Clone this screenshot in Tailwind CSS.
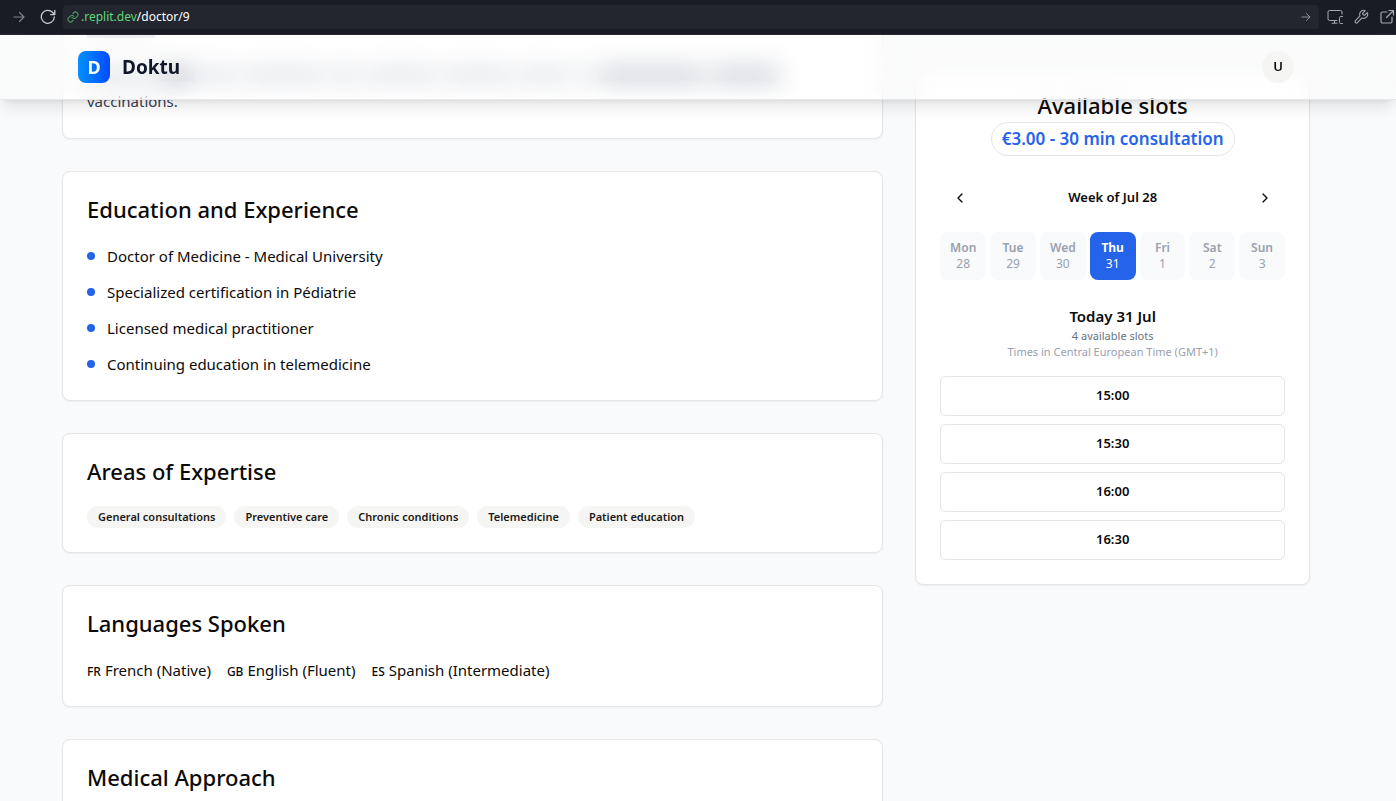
<!DOCTYPE html>
<html lang="en">
<head>
<meta charset="utf-8">
<meta name="viewport" content="width=device-width, initial-scale=1">
<title>Doktu</title>
<script src="https://cdn.jsdelivr.net/npm/@tailwindcss/browser@4"></script>
</head>
<body class="flex h-screen flex-col overflow-hidden bg-[#f9fafb] font-['Noto_Sans','Open_Sans',sans-serif] text-stone-950">

<!-- Browser toolbar -->
<div class="relative z-20 flex h-[35px] shrink-0 items-center border-b border-[#2a2630] bg-[#1a1c25] pr-px pl-3 text-[#a6a8b0]">
  <button type="button" aria-label="Forward" class="mr-3.5 text-[#7f828c]">
    <svg class="size-3.5" viewBox="0 0 14 14" fill="none" stroke="currentColor" stroke-width="1.2" stroke-linecap="round" stroke-linejoin="round"><path d="M2 7h10M7.500 2.500 12 7l-4.500 4.500"/></svg>
  </button>
  <button type="button" aria-label="Reload" class="mr-[7px] text-[#c9cbd1]">
    <svg class="size-4" viewBox="0 0 16 16" fill="none" stroke="currentColor" stroke-width="1.3" stroke-linecap="round" stroke-linejoin="round"><path d="M14.300 8A6.500 6.500 0 1 1 12.500 3.300L14.600 5.500M14.800 1.500v4.100h-4.100"/></svg>
  </button>
  <div class="flex h-6 flex-1 items-center rounded bg-[#23262f] px-1">
    <svg class="mr-0.5 size-3 shrink-0 text-[#4f9a63]" viewBox="0 0 24 24" fill="none" stroke="currentColor" stroke-width="2.200" stroke-linecap="round" stroke-linejoin="round"><path d="M10 13a5 5 0 0 0 7.540.540l3-3a5 5 0 0 0-7.070-7.070l-1.720 1.710"/><path d="M14 11a5 5 0 0 0-7.540-.540l-3 3a5 5 0 0 0 7.070 7.070l1.710-1.710"/></svg>
    <a href="#" class="flex-1 text-xs text-white"><span class="text-[#5fd878]">.replit.dev</span>/doctor/9</a>
    <button type="button" aria-label="Go" class="mr-1 text-[#8b8e98]">
      <svg class="size-2.5" viewBox="0 0 10 10" fill="none" stroke="currentColor" stroke-linecap="round" stroke-linejoin="round"><path d="M1 5h8M5.500 1.500 9 5 5.500 8.500"/></svg>
    </button>
  </div>
  <div class="ml-2 flex items-center gap-2.5">
    <button type="button" aria-label="Device preview">
      <svg class="size-4" viewBox="0 0 16 16" fill="none" stroke="currentColor" stroke-linecap="round" stroke-linejoin="round"><path d="M10 11.500H2.500a1.500 1.500 0 0 1-1.500-1.500V3a1.500 1.500 0 0 1 1.500-1.500h11A1.500 1.500 0 0 1 15 3v2M7.500 11.500v2.500M5 14.200h5"/><path d="M15.500 7.500h-2a1 1 0 0 0-1 1v5a1 1 0 0 0 1 1h2"/></svg>
    </button>
    <button type="button" aria-label="Tools">
      <svg class="size-4" viewBox="0 0 24 24" fill="none" stroke="currentColor" stroke-width="1.600" stroke-linecap="round" stroke-linejoin="round"><path d="M14.700 6.300a1 1 0 0 0 0 1.400l1.600 1.600a1 1 0 0 0 1.400 0l3.770-3.770a6 6 0 0 1-7.940 7.940l-6.910 6.910a2.120 2.120 0 0 1-3-3l6.910-6.910a6 6 0 0 1 7.940-7.940l-3.760 3.760z"/></svg>
    </button>
    <button type="button" aria-label="Open in new tab">
      <svg class="size-4" viewBox="0 0 16 16" fill="none" stroke="currentColor" stroke-width="1.2" stroke-linecap="round" stroke-linejoin="round"><path d="M8 3H3.500A1.500 1.500 0 0 0 2 4.500v8A1.500 1.500 0 0 0 3.500 14h8a1.500 1.500 0 0 0 1.500-1.500V8M10 1.500h4.500V6M14.500 1.500 7.500 8.500"/></svg>
    </button>
  </div>
</div>

<!-- Site header -->
<header class="relative z-10 h-[65px] shrink-0 border-b border-gray-200 bg-white/20 pr-6 shadow-[0_10px_15px_-3px_rgb(0_0_0/0.1),0_4px_6px_-4px_rgb(0_0_0/0.1)] backdrop-blur-md">
  <div class="mx-auto flex h-16 max-w-7xl items-center justify-between px-8">
    <a href="#" class="flex items-center gap-3">
      <span class="flex size-8 items-center justify-center rounded-lg bg-linear-to-r from-[#0d8fff] to-[#0d47ff] text-lg font-bold text-white">D</span>
      <span class="text-[19px] font-bold text-slate-900">Doktu</span>
    </a>
    <button type="button" aria-label="User menu" class="flex size-8 items-center justify-center rounded-full bg-stone-100 text-[13px] font-semibold">U</button>
  </div>
</header>

<!-- Doctor profile, scrolled under the header -->
<main class="-mt-[111px] min-h-0 flex-1 overflow-hidden pr-6">
  <div class="mx-auto grid max-w-7xl grid-cols-3 items-start gap-8 px-4">
    <div class="col-span-2 flex flex-col gap-8">

      <section class="rounded-lg border border-[#e5e5e5] bg-white p-6 shadow-xs">
        <!-- Lines that show only as a haze through the header's blur -->
        <div class="flex h-6 items-end"><span class="h-4 w-17 bg-gray-300"></span></div>
        <div class="mt-6 flex h-[26px] items-center gap-2">
          <span class="h-3 w-16 bg-gray-300"></span>
          <span class="h-3 w-9 bg-gray-400"></span>
          <span class="h-3 w-8 bg-gray-300"></span>
          <span class="h-3 w-20 bg-gray-300"></span>
          <span class="h-3 w-7 bg-gray-300"></span>
          <span class="h-3 w-17 bg-gray-300"></span>
          <span class="h-3 w-17 bg-gray-300"></span>
          <span class="h-3 w-12 bg-gray-300"></span>
          <span class="h-3 w-4 bg-gray-300"></span>
          <span class="h-3 w-26 bg-gray-400/80"></span>
          <span class="h-3 w-17 bg-gray-400/80"></span>
        </div>
        <p class="text-[15px] leading-[26px] text-gray-700">vaccinations.</p>
      </section>

      <section class="rounded-lg border border-[#e5e5e5] bg-white p-6 shadow-xs">
        <h2 class="text-[22px] leading-[26px] font-medium">Education and Experience</h2>
        <ul class="mt-[22px] flex flex-col gap-3 text-[15px] leading-6">
          <li class="flex items-center gap-3"><span class="size-2 rounded-full bg-[#2563eb]"></span>Doctor of Medicine - Medical University</li>
          <li class="flex items-center gap-3"><span class="size-2 rounded-full bg-[#2563eb]"></span>Specialized certification in Pédiatrie</li>
          <li class="flex items-center gap-3"><span class="size-2 rounded-full bg-[#2563eb]"></span>Licensed medical practitioner</li>
          <li class="flex items-center gap-3"><span class="size-2 rounded-full bg-[#2563eb]"></span>Continuing education in telemedicine</li>
        </ul>
      </section>

      <section class="rounded-lg border border-[#e5e5e5] bg-white p-6 shadow-xs">
        <h2 class="text-[22px] leading-[26px] font-medium">Areas of Expertise</h2>
        <div class="mt-[22px] flex flex-wrap gap-2 text-[11px] leading-[22px] font-semibold text-stone-900">
          <span class="rounded-full bg-stone-100 px-[11px]">General consultations</span>
          <span class="rounded-full bg-stone-100 px-[11px]">Preventive care</span>
          <span class="rounded-full bg-stone-100 px-[11px]">Chronic conditions</span>
          <span class="rounded-full bg-stone-100 px-[11px]">Telemedicine</span>
          <span class="rounded-full bg-stone-100 px-[11px]">Patient education</span>
        </div>
      </section>

      <section class="rounded-lg border border-[#e5e5e5] bg-white p-6 shadow-xs">
        <h2 class="text-[22px] leading-[26px] font-medium">Languages Spoken</h2>
        <div class="mt-[22px] flex h-6 gap-4 text-[15px] leading-6">
          <span class="flex items-baseline gap-1"><span class="text-xs font-medium">FR</span>French (Native)</span>
          <span class="flex items-baseline gap-1"><span class="text-xs font-medium">GB</span>English (Fluent)</span>
          <span class="flex items-baseline gap-1"><span class="text-xs font-medium">ES</span>Spanish (Intermediate)</span>
        </div>
      </section>

      <section class="rounded-lg border border-[#e5e5e5] bg-white p-6 shadow-xs">
        <h2 class="text-[22px] leading-[26px] font-medium">Medical Approach</h2>
      </section>
    </div>

    <!-- Booking -->
    <aside class="mt-[78px] rounded-lg border border-[#e5e5e5] bg-white p-6 text-center shadow-xs">
      <h2 class="text-[22px] leading-[26px] font-medium">Available slots</h2>
      <div class="mt-1 inline-flex rounded-full border border-[#e5e5e5] px-2.5 py-0.5 text-[17px] leading-7 font-semibold text-[#2563eb]">€3.00 - 30 min consultation</div>

      <div class="mt-6 flex items-center justify-between">
        <button type="button" aria-label="Previous week" class="flex h-9 w-10 items-center justify-center">
          <svg class="size-4" viewBox="0 0 24 24" fill="none" stroke="currentColor" stroke-width="2" stroke-linecap="round" stroke-linejoin="round"><path d="m15 18-6-6 6-6"/></svg>
        </button>
        <span class="text-[13px] font-semibold">Week of Jul 28</span>
        <button type="button" aria-label="Next week" class="flex h-9 w-10 items-center justify-center">
          <svg class="size-4" viewBox="0 0 24 24" fill="none" stroke="currentColor" stroke-width="2" stroke-linecap="round" stroke-linejoin="round"><path d="m9 18 6-6-6-6"/></svg>
        </button>
      </div>

      <div class="mt-4 grid grid-cols-7 gap-1 text-xs leading-4 text-gray-400">
        <button type="button" class="rounded-lg bg-gray-50 py-2"><span class="block font-semibold">Mon</span>28</button>
        <button type="button" class="rounded-lg bg-gray-50 py-2"><span class="block font-semibold">Tue</span>29</button>
        <button type="button" class="rounded-lg bg-gray-50 py-2"><span class="block font-semibold">Wed</span>30</button>
        <button type="button" aria-pressed="true" class="rounded-lg bg-[#2563eb] py-2 text-white"><span class="block font-bold">Thu</span>31</button>
        <button type="button" class="rounded-lg bg-gray-50 py-2"><span class="block font-semibold">Fri</span>1</button>
        <button type="button" class="rounded-lg bg-gray-50 py-2"><span class="block font-semibold">Sat</span>2</button>
        <button type="button" class="rounded-lg bg-gray-50 py-2"><span class="block font-semibold">Sun</span>3</button>
      </div>

      <h3 class="mt-6 text-[15px] leading-6 font-semibold">Today 31 Jul</h3>
      <p class="text-[11px] leading-4 text-gray-500">4 available slots</p>
      <p class="text-[11px] leading-4 text-gray-400">Times in Central European Time (GMT+1)</p>

      <div class="mt-4 flex flex-col gap-2 text-[13px] font-semibold">
        <button type="button" class="h-10 rounded-md border border-[#e5e5e5]">15:00</button>
        <button type="button" class="h-10 rounded-md border border-[#e5e5e5]">15:30</button>
        <button type="button" class="h-10 rounded-md border border-[#e5e5e5]">16:00</button>
        <button type="button" class="h-10 rounded-md border border-[#e5e5e5]">16:30</button>
      </div>
    </aside>
  </div>
</main>
</body>
</html>
